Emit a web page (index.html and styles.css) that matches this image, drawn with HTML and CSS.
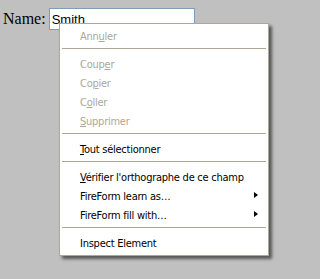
FILE: index.html
```html
<!DOCTYPE html>
<html>
<head>
<meta charset="utf-8">
<link rel="stylesheet" href="styles.css">
</head>
<body>
<div class="form-row">
  <label class="label">Name:</label>
  <div class="field">Smith</div>
</div>
<div class="menu">
  <div class="item disabled">Ann<u>u</u>ler</div>
  <div class="sep"></div>
  <div class="item disabled">Coup<u>e</u>r</div>
  <div class="item disabled">Co<u>p</u>ier</div>
  <div class="item disabled">C<u>o</u>ller</div>
  <div class="item disabled"><u>S</u>upprimer</div>
  <div class="sep"></div>
  <div class="item"><u>T</u>out sélectionner</div>
  <div class="sep"></div>
  <div class="item"><u>V</u>érifier l'orthographe de ce champ</div>
  <div class="item sub">FireForm learn as…<span class="arrow"></span></div>
  <div class="item sub">FireForm fill with…<span class="arrow"></span></div>
  <div class="sep"></div>
  <div class="item">Inspect Element</div>
</div>
</body>
</html>
```
FILE: styles.css
```css
html, body {
  margin: 0;
  padding: 0;
  background: #c0c0c0;
  width: 290px;
  height: 279px;
  overflow: hidden;
}
.form-row {
  display: flex;
  align-items: baseline;
  padding: 8px 0 0 3px;
  gap: 3px;
}
.label {
  font-family: "Liberation Serif", serif;
  font-size: 16px;
  color: #000;
}
.field {
  box-sizing: border-box;
  width: 146px;
  height: 22px;
  border: 1px solid #7f9db9;
  background: #fff;
  padding: 2px 2px 0 2px;
  font-family: "Liberation Sans", sans-serif;
  font-size: 13px;
  line-height: 17px;
  color: #000;
}
.menu {
  position: absolute;
  left: 59px;
  top: 23px;
  box-sizing: border-box;
  width: 210px;
  height: 233px;
  background: #fff;
  border: 1px solid #aca899;
  padding: 3px 1px 2px 1px;
  box-shadow: 3px 3px 3px rgba(0, 0, 0, 0.55);
  font-family: "DejaVu Sans Condensed", "DejaVu Sans", sans-serif;
  font-size: 11px;
  letter-spacing: -0.25px;
  color: #000;
}
.item {
  position: relative;
  height: 19px;
  line-height: 19px;
  padding-left: 19px;
  white-space: nowrap;
}
.item u {
  text-decoration: underline;
  text-underline-offset: 1px;
}
.disabled {
  color: #aca899;
}
.sep {
  height: 1px;
  background: #aca899;
  margin: 2px 1px 6px 1px;
}
.arrow {
  position: absolute;
  right: 9px;
  top: 5px;
  width: 0;
  height: 0;
  border-top: 3.5px solid transparent;
  border-bottom: 3.5px solid transparent;
  border-left: 4px solid #000;
}
```
